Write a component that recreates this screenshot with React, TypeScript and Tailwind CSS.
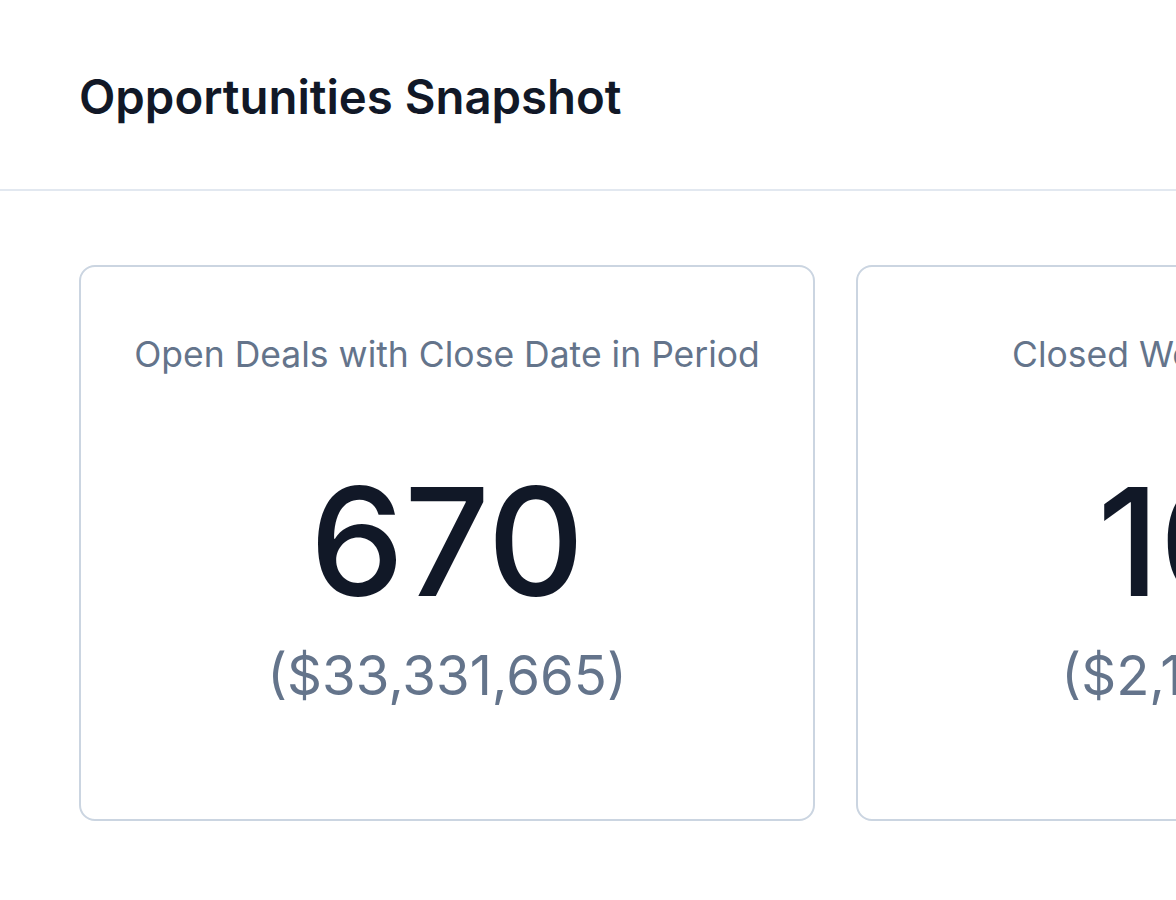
export default function App() {
  const cards = [
    { label: "Open Deals with Close Date in Period", count: "670", amount: "($33,331,665)" },
    { label: "Closed Won in the Period", count: "108", amount: "($2,104,220)" },
  ]
  return (
    <div className="h-[900px] w-[1176px] overflow-hidden bg-white font-['Inter',sans-serif]">
      {/* header */}
      <div className="h-[191px] border-b-2 border-[#e2e8f0] px-[79px] pt-[65px]">
        <h1 className="text-[47.3px] font-semibold leading-[64px] text-[#111827]">Opportunities Snapshot</h1>
      </div>

      {/* cards */}
      <div className="flex gap-[41px] pl-[79px] pt-[74px]">
        {cards.map((c) => (
          <div
            key={c.label}
            className="flex h-[556px] w-[736px] shrink-0 flex-col items-center rounded-[16px] border-2 border-[#cbd5e1] pt-[66px]"
          >
            <p className="whitespace-nowrap text-[35.5px] leading-[44px] text-[#64748b]">{c.label}</p>
            <p className="mt-[90px] text-[150px] font-medium leading-[150px] text-[#111827]">{c.count}</p>
            <p className="mt-[26px] text-[54.5px] leading-[64px] text-[#64748b]">{c.amount}</p>
          </div>
        ))}
      </div>
    </div>
  )
}
